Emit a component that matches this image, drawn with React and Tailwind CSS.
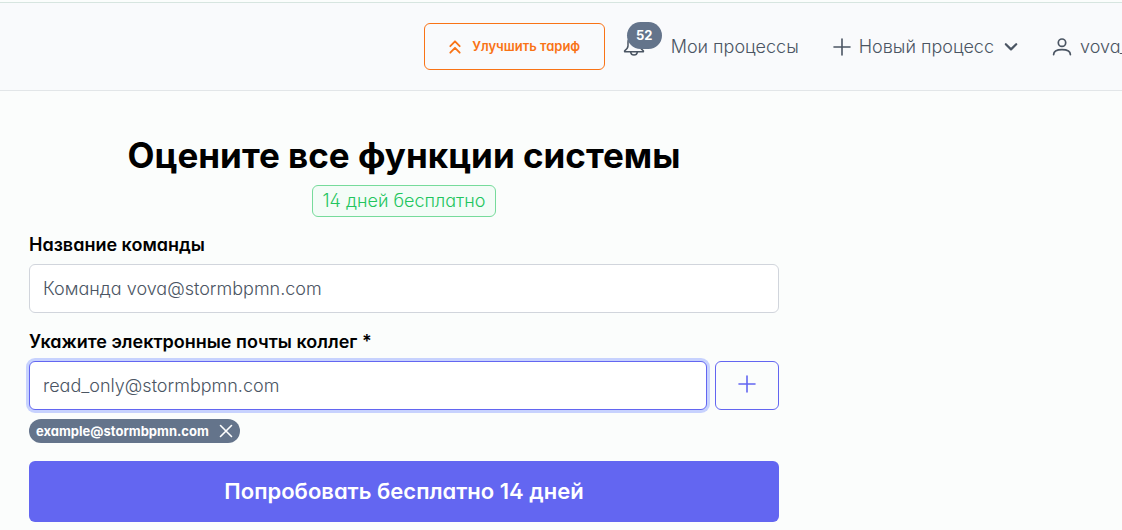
import { useState } from "react";

const AngleDoubleUpIcon = () => (
  <svg width="14" height="16" viewBox="0 0 14 16" fill="none" stroke="currentColor" strokeWidth="1.8" strokeLinecap="round" strokeLinejoin="round" aria-hidden="true">
    <path d="M2.3 7.2 7 2.3l4.7 4.9M2.3 13.7 7 8.8l4.7 4.9" />
  </svg>
);

const BellIcon = () => (
  <svg width="22" height="22" viewBox="0 0 22 22" fill="none" stroke="currentColor" strokeWidth="1.5" strokeLinecap="round" strokeLinejoin="round" aria-hidden="true">
    <path d="M11 .2c-3.600 0-6 2.600-6 6v3.600c0 2-.8 3.300-3.400 5v.9h18.800v-.9c-2.600-1.700-3.400-3-3.400-5V6.200c0-3.400-2.400-6-6-6Z" />
    <path d="M7.600 15.900c.3 2 1.600 3.200 3.400 3.200s3.100-1.200 3.400-3.200" />
  </svg>
);

const PlusIcon = () => (
  <svg width="18" height="18" viewBox="0 0 18 18" fill="none" stroke="currentColor" strokeWidth="1.6" strokeLinecap="round" className="shrink-0" aria-hidden="true">
    <path d="M9 1v16M1 9h16" />
  </svg>
);

const ChevronDownIcon = () => (
  <svg width="14" height="14" viewBox="0 0 14 14" fill="none" stroke="currentColor" strokeWidth="2.2" strokeLinecap="round" strokeLinejoin="round" aria-hidden="true">
    <path d="m1.800 4.200 5.200 5.200 5.200-5.200" />
  </svg>
);

const UserIcon = () => (
  <svg width="20" height="18" viewBox="0 0 20 18" fill="none" stroke="currentColor" strokeWidth="1.7" strokeLinecap="round" className="shrink-0" aria-hidden="true">
    <circle cx="10" cy="4.700" r="3.700" />
    <path d="M1.600 16.600c.1-3 3.400-4.900 8.400-4.900s8.300 1.900 8.400 4.900" />
  </svg>
);

const CloseIcon = () => (
  <svg width="14" height="14" viewBox="0 0 14 14" fill="none" stroke="currentColor" strokeWidth="1.6" strokeLinecap="round" aria-hidden="true">
    <path d="m1.500 1.500 11 11M12.500 1.500l-11 11" />
  </svg>
);

function Header() {
  return (
    <header className="mt-0.5 flex h-[89px] items-center overflow-hidden border-t border-b border-t-[#d7e5e0] border-b-[#e2e6e8] bg-[#f9fafc] text-[#4b5563]">
      <nav className="ml-auto flex shrink-0 items-center whitespace-nowrap">
        <button type="button" className="flex h-[47px] w-[181px] items-center justify-center gap-2.5 rounded-md border border-[#f97316] text-[13px] font-semibold text-[#f97316]">
          <AngleDoubleUpIcon />
          Улучшить тариф
        </button>
        <a href="#notifications" aria-label="Уведомления" className="relative ml-[18px] block">
          <BellIcon />
          <span className="absolute -top-3.5 left-1 flex h-[27px] w-[35px] items-center justify-center rounded-full bg-[#64748b] text-[13px] font-bold text-white">
            52
          </span>
        </a>
        <a href="#processes" className="ml-[26px]">Мои процессы</a>
        <button type="button" className="ml-[34px] flex items-center gap-2">
          <PlusIcon />
          Новый процесс
          <span className="ml-0.5">
            <ChevronDownIcon />
          </span>
        </button>
        <a href="#profile" className="ml-[34px] flex w-[70px] items-center gap-2">
          <UserIcon />
          vova_
        </a>
      </nav>
    </header>
  );
}

export default function App() {
  const [team, setTeam] = useState("Команда vova@stormbpmn.com");
  const [email, setEmail] = useState("read_only@stormbpmn.com");
  const [emails, setEmails] = useState(["example@stormbpmn.com"]);

  const addEmail = () => {
    if (!email || emails.includes(email)) return;
    setEmails([...emails, email]);
    setEmail("");
  };

  const removeEmail = (item) => {
    setEmails(emails.filter((e) => e !== item));
  };

  return (
    <div className="min-h-screen overflow-hidden bg-[#fbfdfc] font-['Inter',sans-serif] text-lg font-light text-black [font-feature-settings:'cv02','cv03','cv04','cv11']">
      <Header />
      <main className="px-[29px] pt-11 pb-2">
        <form onSubmit={(e) => e.preventDefault()} className="flex max-w-[750px] flex-col">
          <h1 className="text-center text-[35px] leading-10 font-bold">Оцените все функции системы</h1>
          <span className="mt-2.5 flex h-8 items-center self-center rounded-md border border-[#76db9b] bg-[#f3fcf7] px-2.5 text-[#22c55e]">
            14 дней бесплатно
          </span>

          <label htmlFor="team" className="mt-3.5 leading-7 font-semibold">Название команды</label>
          <input
            id="team"
            type="text"
            value={team}
            onChange={(e) => setTeam(e.target.value)}
            className="mt-[5px] h-[49px] w-full rounded-md border border-gray-300 bg-white px-[13px] text-[#4b5563] outline-none"
          />

          <label htmlFor="email" className="mt-[15px] leading-7 font-semibold">Укажите электронные почты коллег *</label>
          <div className="mt-[5px] flex gap-2">
            <input
              id="email"
              type="email"
              value={email}
              onChange={(e) => setEmail(e.target.value)}
              className="h-[49px] min-w-0 flex-1 rounded-md border border-[#6366f1] bg-white px-[13px] text-[#4b5563] ring-3 ring-[#c7d2fe] outline-none"
            />
            <button
              type="button"
              aria-label="Добавить"
              onClick={addEmail}
              className="flex w-16 items-center justify-center rounded-md border border-[#6366f1] pb-1 text-[#6366f1]"
            >
              <PlusIcon />
            </button>
          </div>

          <div className="mt-[9px] flex flex-wrap gap-2">
            {emails.map((item) => (
              <span key={item} className="flex h-6 items-center gap-2.5 rounded-full bg-[#64748b] px-[7px] text-[13px] font-bold text-white">
                {item}
                <button type="button" aria-label="Удалить" onClick={() => removeEmail(item)}>
                  <CloseIcon />
                </button>
              </span>
            ))}
          </div>

          <button type="submit" className="mt-[18px] h-[61px] rounded-md bg-[#6366f1] text-[22px] font-semibold text-white">
            Попробовать бесплатно 14 дней
          </button>
        </form>
      </main>
    </div>
  );
}
